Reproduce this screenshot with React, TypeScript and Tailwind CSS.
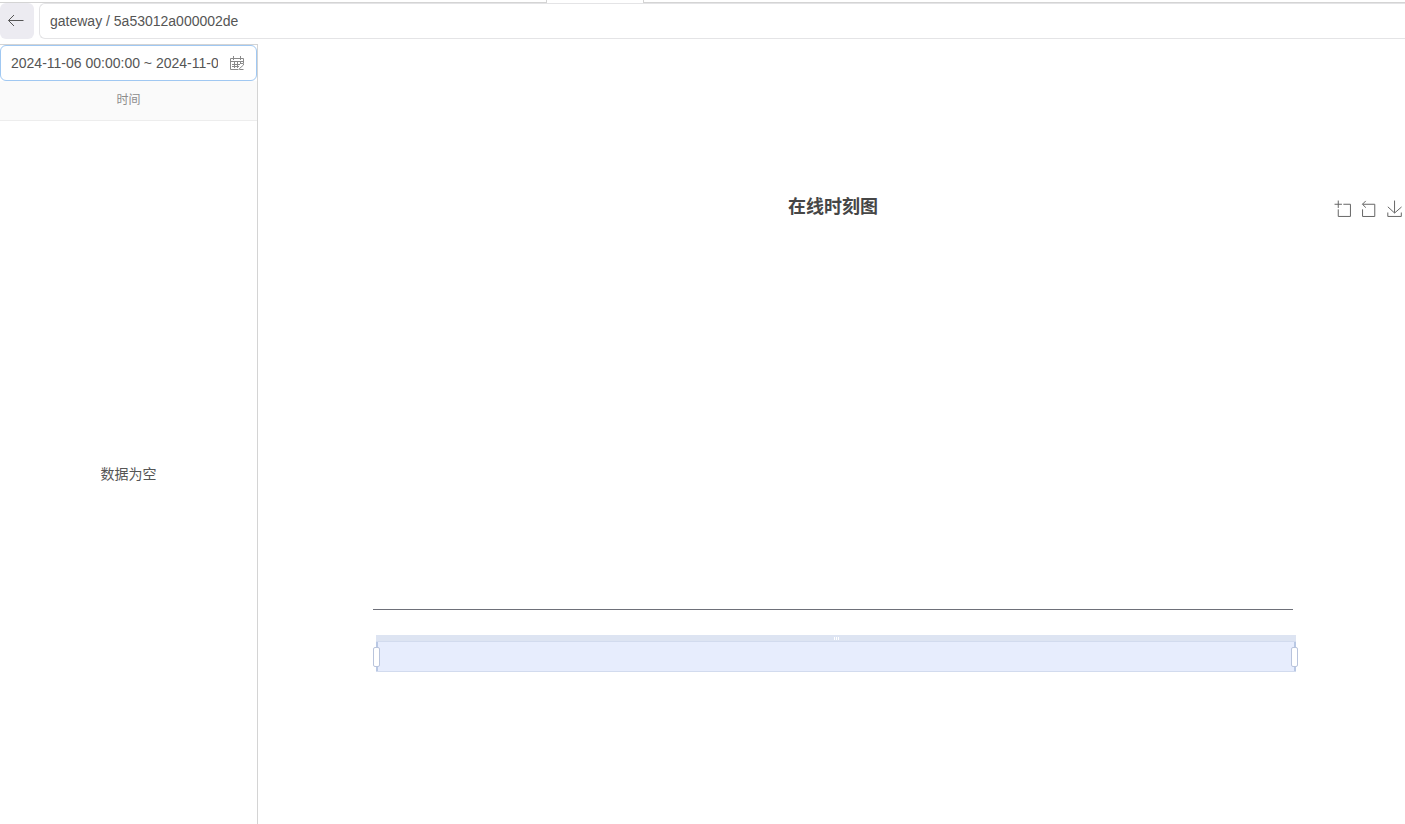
const toolboxIcons = [
  {
    name: "区域缩放",
    viewBox: "-2 -2 62 62",
    path: "M0,13.5h26.9 M13.5,26.9V0 M32.1,13.5H58V58H13.5V32.1",
  },
  {
    name: "区域缩放还原",
    viewBox: "1 -2 62 62",
    path: "M22,1.4L9.9,13.5l12.3,12.3 M10.3,13.5H54.9v44.6H10.3v-26",
  },
  {
    name: "保存为图片",
    viewBox: "-2 -2 62 62",
    path: "M4.7,22.9L29.3,45.5L54.7,23.4 M4.6,43.6L4.6,58L53.8,58L53.8,43.6 M29.2,45.1L29.2,0",
  },
];

function Tabs() {
  return (
    <div className="flex h-[3px]">
      <div className="flex-[547] border-r border-b border-[#d4d4d4]" />
      <div className="w-24" />
      <div className="flex-[762] border-b border-l border-[#d4d4d4]" />
    </div>
  );
}

function Header() {
  return (
    <header className="flex h-9 gap-[5px]">
      <button
        type="button"
        aria-label="返回"
        className="flex w-[34px] items-center rounded-md bg-[#ecebf1] pl-2"
      >
        <svg width="16" height="14" viewBox="0 0 16 14" fill="none" stroke="#555">
          <path d="M0.5 6.5H15.5M6 1L0.5 6.5L6 12" />
        </svg>
      </button>
      <div className="flex flex-1 items-center rounded-l-md border border-r-0 border-[#e4e4e6] px-[10px] text-sm">
        gateway / 5a53012a000002de
      </div>
    </header>
  );
}

function CalendarIcon() {
  return (
    <svg width="15" height="15" viewBox="0 0 15 15" fill="none" stroke="#8a8a8a">
      <path d="M13.5 7V2.5H0.5V13.5H8.5M0.5 5.5H13.5M3.5 0V4M10.5 0V4" />
      <path d="M2 8.5H10M2 10.5H9M4.5 6V12M7.5 6V12M10.5 6V8" />
      <path d="M11 7.5H13.5V9L9.5 12.5V13.5H13.5" />
    </svg>
  );
}

function Sidebar() {
  return (
    <aside className="flex w-[258px] shrink-0 flex-col border-t border-r border-[#d4d4d4]">
      <div className="flex h-9 shrink-0 items-center gap-3 rounded-md border border-[#a0c8f2] pr-[11px] pl-[10px]">
        <input
          type="text"
          aria-label="时间范围"
          defaultValue="2024-11-06 00:00:00 ~ 2024-11-0"
          className="min-w-0 flex-1 bg-transparent text-sm outline-none"
        />
        <CalendarIcon />
      </div>
      <table className="w-full text-xs text-[#8c8c8c]">
        <thead>
          <tr className="h-[39px] border-b border-[#ededed] bg-[#fafafa]">
            <th className="font-normal">时间</th>
          </tr>
        </thead>
      </table>
      <div className="flex flex-1 items-center justify-center pt-1 text-sm">数据为空</div>
    </aside>
  );
}

function Handle({ className }: { className: string }) {
  return (
    <div className={`absolute inset-y-0 w-[2px] bg-[#b9c8e4] ${className}`}>
      <div className="absolute top-[5px] -left-[3px] h-5 w-[7px] rounded-xs border border-[#b9c4dc] bg-white" />
    </div>
  );
}

function DataZoom() {
  return (
    <div className="ml-[3px] -mr-[3px]">
      <div className="flex h-[6px] items-center justify-center gap-px bg-[#dde4f2]">
        <span className="h-[3px] w-px bg-white" />
        <span className="h-[3px] w-px bg-white" />
        <span className="h-[3px] w-px bg-white" />
      </div>
      <div className="relative h-[31px] border-y border-[#d2dbee] bg-[#e7edfd]">
        <Handle className="left-0" />
        <Handle className="right-0" />
      </div>
    </div>
  );
}

function OnlineChart() {
  return (
    <section className="-mr-[3px] min-w-0 flex-1 pt-[149px]">
      <div className="relative">
        <h2 className="text-center text-lg leading-7 font-bold text-[#464646]">在线时刻图</h2>
        <div className="absolute top-[7px] right-[5px] flex gap-[9px]">
          {toolboxIcons.map((icon) => (
            <button key={icon.name} type="button" aria-label={icon.name}>
              <svg width="17" height="17" viewBox={icon.viewBox} fill="none" stroke="#666">
                <path d={icon.path} vectorEffect="non-scaling-stroke" />
              </svg>
            </button>
          ))}
        </div>
      </div>
      <div className="mx-[10%]">
        <div className="h-[389px] border-b border-[#6e7079]" />
        <div className="pt-[25px]">
          <DataZoom />
        </div>
      </div>
    </section>
  );
}

export default function App() {
  return (
    <div className="flex min-h-screen flex-col overflow-hidden bg-white font-['Liberation_Sans','Noto_Sans_CJK_SC',sans-serif] text-[#555]">
      <Tabs />
      <Header />
      <main className="flex flex-1 pt-[5px]">
        <Sidebar />
        <OnlineChart />
      </main>
    </div>
  );
}
